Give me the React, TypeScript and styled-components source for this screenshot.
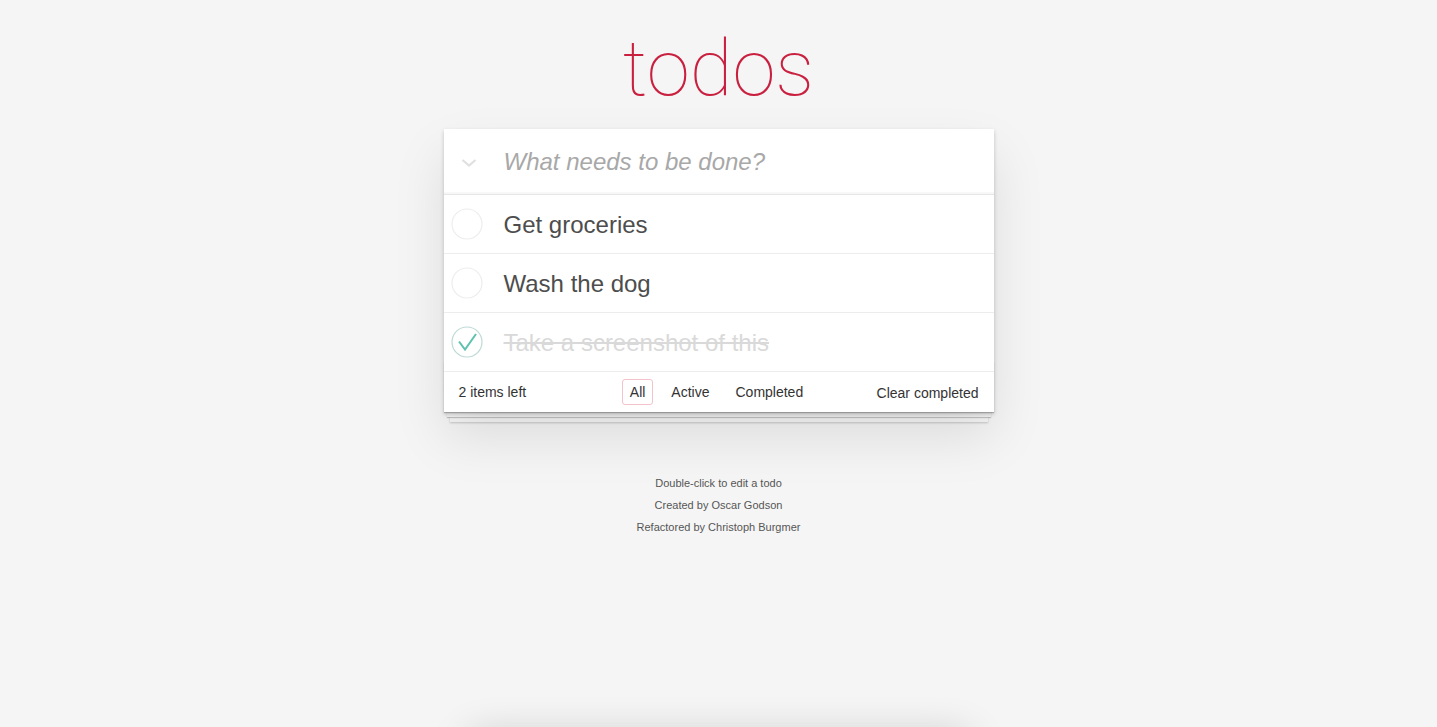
import React from "react";
import styled, { createGlobalStyle } from "styled-components";

const GlobalStyle = createGlobalStyle`
  html, body { margin: 0; padding: 0; }
  body {
    background: #f5f5f5;
    font-family: "Liberation Sans", Arial, sans-serif;
    font-weight: 300;
    color: #4d4d4d;
    font-size: 14px;
    -webkit-font-smoothing: antialiased;
  }
`;

const Page = styled.div`
  max-width: 550px;
  margin: 0 auto;
  display: flex;
  flex-direction: column;
`;

const Title = styled.h1`
  margin: 0;
  padding-top: 29px;
  height: 129px;
  box-sizing: border-box;
  font-family: Roboto, "Liberation Sans", sans-serif;
  font-weight: 100;
  font-size: 78px;
  line-height: 80px;
  text-align: center;
  color: #c9203f;
`;

const Card = styled.section`
  position: relative;
  background: #fff;
  box-shadow: 0 2px 4px 0 rgba(0, 0, 0, 0.2), 0 25px 50px 0 rgba(0, 0, 0, 0.1);
`;

const InputRow = styled.div`
  display: flex;
  align-items: center;
  height: 66px;
  box-sizing: border-box;
  box-shadow: inset 0 -2px 1px rgba(0, 0, 0, 0.03);
  border-bottom: 1px solid #e6e6e6;
`;

const ToggleAll = styled.div`
  width: 60px;
  display: flex;
  justify-content: center;
  padding-right: 10px;
  box-sizing: border-box;
  padding-top: 2px;
`;

const NewTodo = styled.input`
  flex: 1;
  border: none;
  outline: none;
  background: transparent;
  font-family: inherit;
  font-size: 24px;
  font-weight: 300;
  color: #4d4d4d;
  padding: 0 16px 0 0;
  &::placeholder {
    font-style: italic;
    color: #a8a8a8;
    font-weight: 300;
  }
`;

const List = styled.ul`
  list-style: none;
  margin: 0;
  padding: 0;
`;

const Item = styled.li`
  display: flex;
  align-items: center;
  border-bottom: 1px solid #ededed;
`;

const Check = styled.div`
  width: 60px;
  display: flex;
  align-items: center;
  padding-left: 3px;
  box-sizing: border-box;
`;

const Label = styled.label<{ $done?: boolean }>`
  flex: 1;
  padding: 16px 15px 14px 0;
  font-size: 24px;
  line-height: 28px;
  color: ${(p) => (p.$done ? "#d9d9d9" : "#4d4d4d")};
  text-decoration: ${(p) => (p.$done ? "line-through" : "none")};
`;

const Footer = styled.footer`
  position: relative;
  display: grid;
  grid-template-columns: 1fr auto 1fr;
  align-items: center;
  height: 40px;
  padding: 0 15px;
  box-sizing: border-box;
  color: #333;
  font-size: 14px;
  &::before {
    content: "";
    position: absolute;
    left: 0;
    right: 0;
    bottom: 0;
    height: 50px;
    overflow: hidden;
    z-index: -1;
    box-shadow: 0 1px 1px rgba(0, 0, 0, 0.2), 0 8px 0 -3px #f6f6f6,
      0 9px 1px -3px rgba(0, 0, 0, 0.2), 0 16px 0 -6px #f6f6f6,
      0 17px 2px -6px rgba(0, 0, 0, 0.2);
  }
`;

const Count = styled.span`
  justify-self: start;
`;

const Filters = styled.ul`
  list-style: none;
  margin: 0 4px 0 0;
  padding: 0;
  display: flex;
  gap: 10px;
`;

const Filter = styled.a<{ $selected?: boolean }>`
  display: block;
  padding: 3px 7px;
  line-height: 18px;
  border: 1px solid
    ${(p) => (p.$selected ? "rgba(230, 120, 140, 0.45)" : "transparent")};
  border-radius: 3px;
  color: #333;
  text-decoration: none;
`;

const Clear = styled.button`
  justify-self: end;
  border: none;
  background: none;
  padding: 0;
  margin-top: 2px;
  font-family: inherit;
  font-size: 14px;
  font-weight: 300;
  color: #333;
`;

const Info = styled.footer`
  margin-top: 60px;
  text-align: center;
  font-size: 11px;
  color: #555;
  p {
    margin: 0;
    line-height: 22px;
  }
`;

const Shade = styled.div`
  margin: 198px auto 0;
  width: 500px;
  height: 30px;
  background: #f5f5f5;
  box-shadow: 0 0 40px rgba(0, 0, 0, 0.2);
`;

const Circle = ({ done }: { done?: boolean }) => (
  <svg width="40" height="40" viewBox="0 0 40 40">
    <circle
      cx="20"
      cy="20"
      r="15"
      fill="none"
      stroke={done ? "#bddad5" : "#ededed"}
      strokeWidth="1.2"
    />
    {done && (
      <polyline
        points="12,19.5 18,27.5 29,12"
        fill="none"
        stroke="#5dc2af"
        strokeWidth="2"
      />
    )}
  </svg>
);

const todos = [
  { text: "Get groceries", done: false },
  { text: "Wash the dog", done: false },
  { text: "Take a screenshot of this", done: true },
];

export default function App() {
  return (
    <>
      <GlobalStyle />
      <Page>
        <Title>todos</Title>
        <Card>
          <InputRow>
            <ToggleAll>
              <svg width="16" height="10" viewBox="0 0 16 10">
                <polyline
                  points="1.5,2 8,7.5 14.5,2"
                  fill="none"
                  stroke="#e0e0e0"
                  strokeWidth="2.2"
                />
              </svg>
            </ToggleAll>
            <NewTodo placeholder="What needs to be done?" />
          </InputRow>
          <List>
            {todos.map((t) => (
              <Item key={t.text}>
                <Check>
                  <Circle done={t.done} />
                </Check>
                <Label $done={t.done}>{t.text}</Label>
              </Item>
            ))}
          </List>
          <Footer>
            <Count>2 items left</Count>
            <Filters>
              <li>
                <Filter $selected>All</Filter>
              </li>
              <li>
                <Filter>Active</Filter>
              </li>
              <li>
                <Filter>Completed</Filter>
              </li>
            </Filters>
            <Clear>Clear completed</Clear>
          </Footer>
        </Card>
        <Info>
          <p>Double-click to edit a todo</p>
          <p>Created by Oscar Godson</p>
          <p>Refactored by Christoph Burgmer</p>
        </Info>
        <Shade />
      </Page>
    </>
  );
}
